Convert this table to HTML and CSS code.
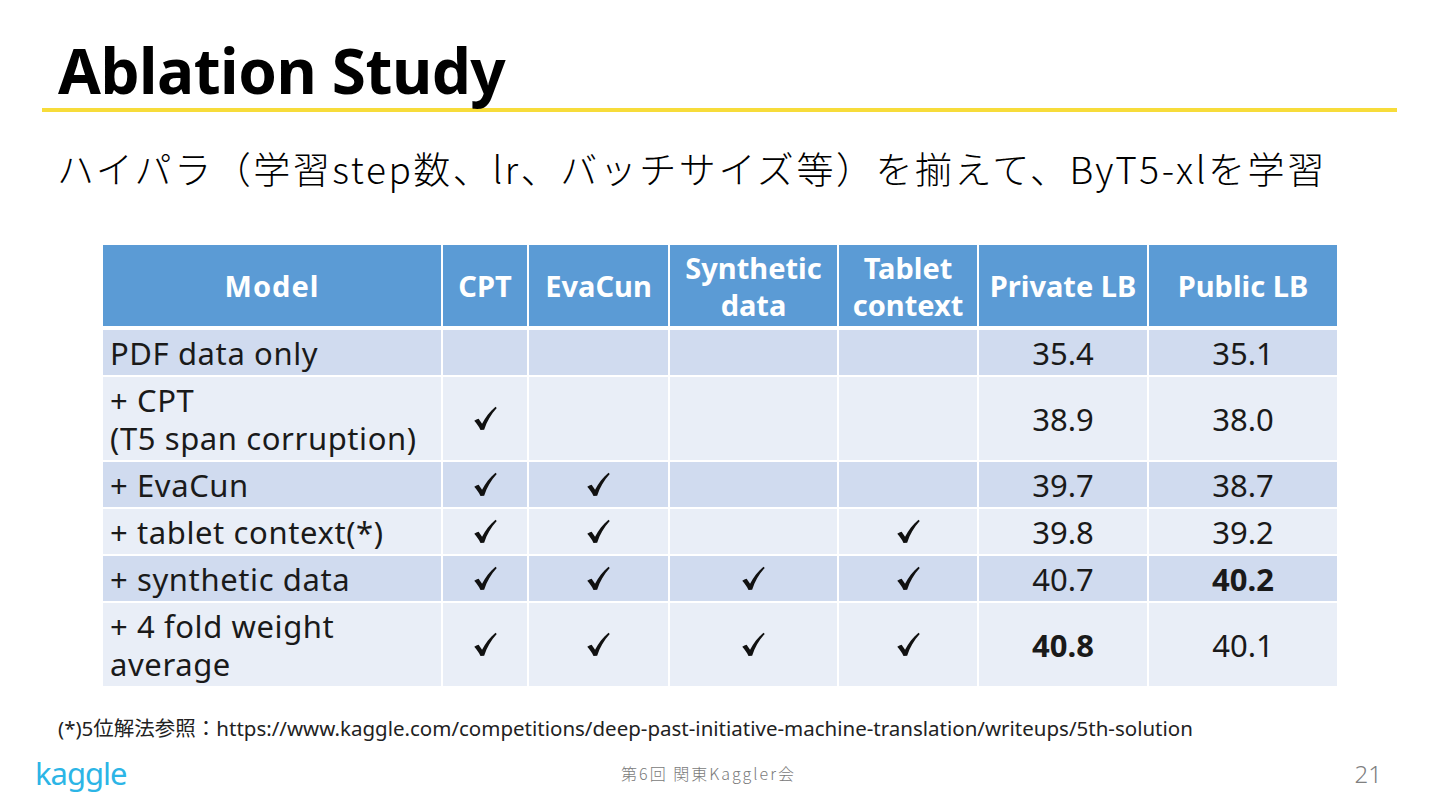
FILE: index.html
```html
<!DOCTYPE html>
<html lang="ja">
<head>
<meta charset="utf-8">
<title>Ablation Study</title>
<link rel="stylesheet" href="styles.css">
</head>
<body>
<svg class="defs" width="0" height="0" aria-hidden="true">
  <symbol id="chk" viewBox="0 0 24 24">
    <path d="M1.2 14.2 C2.6 13.1 4 12.5 5.4 12.2 L8.7 17 C12 10.8 16.2 5.2 21.6 0.8 L22.8 1.8 C17.4 7.8 13.4 14.2 10.7 22.7 L7.2 23 C5.5 19.6 3.4 16.6 1.2 14.2 Z"/>
  </symbol>
</svg>
<div class="slide">
  <header class="title-bar">
    <h1 class="title">Ablation Study</h1>
  </header>
  <p class="lead">ハイパラ（学習step数、lr、バッチサイズ等）を揃えて、ByT5-xlを学習</p>
  <table class="ablation">
    <colgroup>
      <col class="c-model"><col class="c-cpt"><col class="c-eva"><col class="c-syn"><col class="c-tab"><col class="c-priv"><col class="c-pub">
    </colgroup>
    <thead>
      <tr>
        <th>Model</th><th>CPT</th><th>EvaCun</th><th>Synthetic<br>data</th><th>Tablet<br>context</th><th>Private LB</th><th>Public LB</th>
      </tr>
    </thead>
    <tbody>
      <tr class="band1 single">
        <td class="model">PDF data only</td><td></td><td></td><td></td><td></td><td>35.4</td><td>35.1</td>
      </tr>
      <tr class="band2 double">
        <td class="model">+ CPT<br>(T5 span corruption)</td><td class="chk"><svg class="check" aria-label="✓"><use href="#chk"/></svg></td><td></td><td></td><td></td><td>38.9</td><td>38.0</td>
      </tr>
      <tr class="band1 single">
        <td class="model">+ EvaCun</td><td class="chk"><svg class="check" aria-label="✓"><use href="#chk"/></svg></td><td class="chk"><svg class="check" aria-label="✓"><use href="#chk"/></svg></td><td></td><td></td><td>39.7</td><td>38.7</td>
      </tr>
      <tr class="band2 single">
        <td class="model">+ tablet context(*)</td><td class="chk"><svg class="check" aria-label="✓"><use href="#chk"/></svg></td><td class="chk"><svg class="check" aria-label="✓"><use href="#chk"/></svg></td><td></td><td class="chk"><svg class="check" aria-label="✓"><use href="#chk"/></svg></td><td>39.8</td><td>39.2</td>
      </tr>
      <tr class="band1 single">
        <td class="model">+ synthetic data</td><td class="chk"><svg class="check" aria-label="✓"><use href="#chk"/></svg></td><td class="chk"><svg class="check" aria-label="✓"><use href="#chk"/></svg></td><td class="chk"><svg class="check" aria-label="✓"><use href="#chk"/></svg></td><td class="chk"><svg class="check" aria-label="✓"><use href="#chk"/></svg></td><td>40.7</td><td class="best">40.2</td>
      </tr>
      <tr class="band2 double">
        <td class="model">+ 4 fold weight<br>average</td><td class="chk"><svg class="check" aria-label="✓"><use href="#chk"/></svg></td><td class="chk"><svg class="check" aria-label="✓"><use href="#chk"/></svg></td><td class="chk"><svg class="check" aria-label="✓"><use href="#chk"/></svg></td><td class="chk"><svg class="check" aria-label="✓"><use href="#chk"/></svg></td><td class="best">40.8</td><td>40.1</td>
      </tr>
    </tbody>
  </table>
  <p class="note">(*)5位解法参照：https://www.kaggle.com/competitions/deep-past-initiative-machine-translation/writeups/5th-solution</p>
  <footer class="footer">
    <span class="logo">kaggle</span>
    <span class="event">第6回 関東Kaggler会</span>
    <span class="page">21</span>
  </footer>
</div>
</body>
</html>
```
FILE: styles.css
```css
* { box-sizing: border-box; }
html, body { margin: 0; padding: 0; background: #fff; }
body {
  font-family: "Noto Sans", "Noto Sans CJK JP", sans-serif;
  color: #000;
}
.defs { position: absolute; width: 0; height: 0; overflow: hidden; }
.slide {
  width: 1440px;
  height: 810px;
  overflow: hidden;
  display: flex;
  flex-direction: column;
}
.title-bar {
  margin: 0 43px 0 42px;
  border-bottom: 4px solid #f7dc3a;
  padding: 33px 0 0 16px;
}
.title {
  margin: 0;
  font-size: 62px;
  font-weight: 700;
  line-height: 75px;
  letter-spacing: -0.5px;
}
.lead {
  margin: 30px 0 0 57px;
  font-family: "Noto Sans CJK JP", sans-serif;
  font-weight: 300;
  font-size: 37px;
  letter-spacing: 2.55px;
  line-height: 52px;
  white-space: nowrap;
}
.ablation {
  margin: 49px 0 0 101px;
  border-collapse: separate;
  border-spacing: 2px;
  table-layout: fixed;
  width: 1238px;
}
.c-model { width: 338px; }
.c-cpt { width: 84px; }
.c-eva { width: 139px; }
.c-syn { width: 167px; }
.c-tab { width: 138px; }
.c-priv { width: 168px; }
.c-pub { width: 188px; }
.ablation th {
  background: #5b9bd5;
  color: #fff;
  font-weight: 700;
  font-size: 29px;
  line-height: 37px;
  height: 83px;
  padding: 0 4px;
  border-bottom: 2px solid #fff;
  text-align: center;
  vertical-align: middle;
  white-space: nowrap;
}
.ablation th:first-child { letter-spacing: 1px; }
.ablation td {
  font-size: 31px;
  line-height: 38px;
  padding: 0 6px;
  text-align: center;
  vertical-align: middle;
  color: #1a1a1a;
}
.ablation td.model {
  text-align: left;
  padding-left: 7px;
  letter-spacing: 0.6px;
  white-space: nowrap;
}
.ablation tr.single td { height: 45px; }
.ablation tr.double td { height: 83px; }
.band1 td { background: #d0dbef; }
.band2 td { background: #e9eef7; }
.check {
  display: block;
  margin: 0 auto;
  width: 25px;
  height: 25px;
  fill: #111;
}
.ablation td.best { font-weight: 700; }
.note {
  margin: 27px 0 0 58px;
  font-family: "Noto Sans", "Noto Sans CJK JP", sans-serif;
  font-size: 20.5px;
  line-height: 26px;
  color: #222;
  white-space: nowrap;
}
.footer {
  margin-top: auto;
  display: grid;
  grid-template-columns: 1fr auto 1fr;
  align-items: center;
  padding: 0 58px 14px 35px;
  height: 60px;
}
.logo {
  justify-self: start;
  font-family: "Noto Sans", sans-serif;
  font-size: 31px;
  color: #2cb5e6;
  letter-spacing: -1px;
  line-height: 40px;
}
.event {
  font-family: "Noto Sans CJK JP", sans-serif;
  font-weight: 300;
  font-size: 16px;
  letter-spacing: 2px;
  color: #7a7a7a;
}
.page {
  justify-self: end;
  font-family: "Noto Sans", sans-serif;
  font-weight: 300;
  font-size: 24px;
  color: #808080;
}
```
